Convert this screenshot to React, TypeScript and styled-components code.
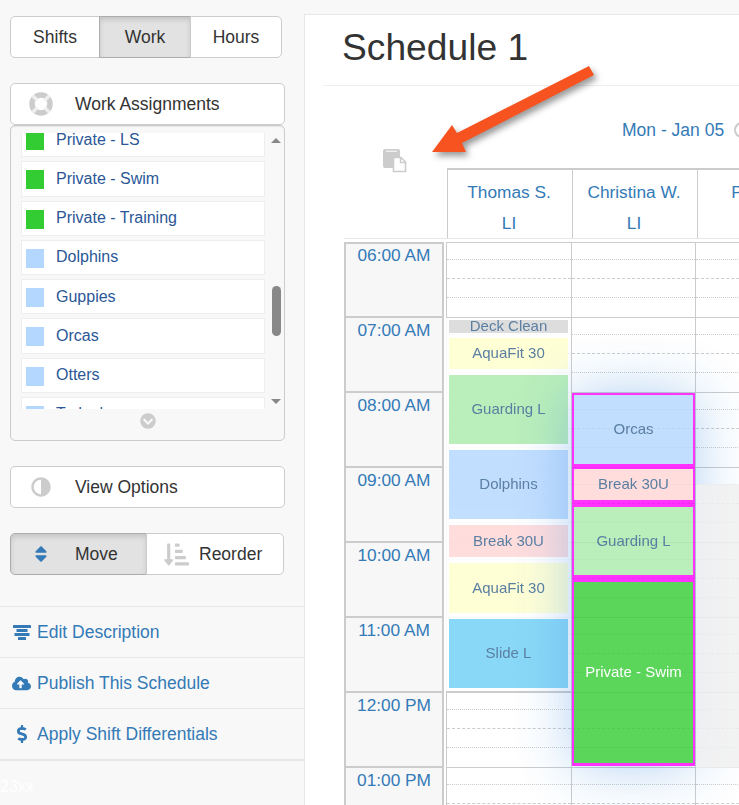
import * as React from "react";
import styled, { createGlobalStyle } from "styled-components";
import {
  FaAdjust,
  FaChevronCircleDown,
  FaCloudUploadAlt,
  FaDollarSign,
  FaSort,
  FaSortAmountDownAlt,
} from "react-icons/fa";

const GlobalStyle = createGlobalStyle`
  html, body {
    margin: 0;
    height: 100%;
    overflow: hidden;
    background: #f8f8f8;
    font-family: "Liberation Sans", Arial, sans-serif;
    font-size: 17.3px;
    color: #333;
  }
  * { box-sizing: border-box; }
`;

const Page = styled.div`
  display: flex;
  height: 805px;
  padding-top: 14px;
  overflow: hidden;
`;

// left column
const Sidebar = styled.aside`
  flex: 0 0 304px;
  margin-top: -14px;
  padding-top: 16px;
  display: flex;
  flex-direction: column;
  font-size: 17.5px;
`;

const Segmented = styled.div<{ $width: number; $mt: number }>`
  display: flex;
  width: ${(p) => p.$width}px;
  height: 42px;
  margin: ${(p) => p.$mt}px 0 0 10px;
`;

const SegButton = styled.div<{ $active?: boolean; $w: number; $start?: number; $gap?: number }>`
  flex: 0 0 ${(p) => p.$w}px;
  display: flex;
  align-items: center;
  justify-content: ${(p) => (p.$start ? "flex-start" : "center")};
  gap: ${(p) => p.$gap || 0}px;
  padding-left: ${(p) => p.$start || 0}px;
  border: 1px solid ${(p) => (p.$active ? "#adadad" : "#ccc")};
  margin-left: -1px;
  background: ${(p) => (p.$active ? "#e2e2e2" : "#fff")};
  box-shadow: ${(p) => (p.$active ? "inset 0 3px 5px rgba(0,0,0,.125)" : "none")};
  &:first-child {
    margin-left: 0;
    border-radius: 5px 0 0 5px;
  }
  &:last-child {
    border-radius: 0 5px 5px 0;
  }
`;

const PanelButton = styled.div<{ $mt: number }>`
  display: flex;
  align-items: center;
  width: 275px;
  height: 42px;
  margin: ${(p) => p.$mt}px 0 0 10px;
  padding-left: 18px;
  background: #fff;
  border: 1px solid #ccc;
  border-radius: 5px;
`;

const PanelIcon = styled.span<{ $flip?: boolean }>`
  display: flex;
  justify-content: center;
  width: 24px;
  margin-right: 22px;
  color: #ccc;
  font-size: 20px;
  transform: ${(p) => (p.$flip ? "scaleX(-1)" : "none")};
`;

const ListPanel = styled.div`
  width: 275px;
  height: 316px;
  margin: 0 0 0 10px;
  padding-top: 7px;
  border: 1px solid #ccc;
  border-radius: 5px;
  box-shadow: inset 0 1px 1px rgba(0, 0, 0, 0.08);
`;

const ListView = styled.div`
  position: relative;
  height: 276px;
  overflow: hidden;
`;

const ListRows = styled.div`
  display: flex;
  flex-direction: column;
  gap: 4px;
  width: 244px;
  margin: -11px 0 0 10px;
`;

const ListRow = styled.div`
  display: flex;
  align-items: center;
  flex: 0 0 35.25px;
  padding-left: 4px;
  background: #fff;
  border: 1px solid #eee;
  color: #2b5797;
  font-size: 16px;
`;

const Swatch = styled.span<{ $color: string }>`
  flex: 0 0 18px;
  height: 19px;
  margin: 2px 12px 0 0;
  background: ${(p) => p.$color};
`;

const ScrollTrack = styled.div`
  position: absolute;
  top: 0;
  right: 0;
  width: 19px;
  height: 276px;
  background: #f8f8f8;
`;

const ScrollThumb = styled.div`
  position: absolute;
  top: 153px;
  left: 7px;
  width: 9px;
  height: 50px;
  border-radius: 5px;
  background: #888;
`;

const ScrollArrow = styled.div<{ $down?: boolean }>`
  position: absolute;
  left: 6px;
  ${(p) => (p.$down ? "bottom: 5px;" : "top: 5px;")}
  border-left: 5px solid transparent;
  border-right: 5px solid transparent;
  ${(p) => (p.$down ? "border-top" : "border-bottom")}: 5px solid #888;
`;

const ListFooter = styled.div`
  display: flex;
  justify-content: center;
  padding-top: 4px;
  color: #ccc;
  font-size: 16px;
  line-height: 0;
`;

const MoveIcon = styled.span`
  display: flex;
  color: #337ab7;
  font-size: 20px;
`;

const ReorderIcon = styled.span`
  display: flex;
  color: #ccc;
  font-size: 25px;
`;

const ActionList = styled.div`
  margin-top: 31px;
  border-bottom: 2px solid #e7e7e7;
`;

const ActionRow = styled.div`
  display: flex;
  align-items: center;
  height: 51px;
  border-top: 1px solid #e7e7e7;
  padding-left: 12px;
  color: #337ab7;
`;

const ActionIcon = styled.span<{ $size: number }>`
  display: flex;
  justify-content: center;
  flex: 0 0 19px;
  margin-right: 6px;
  font-size: ${(p) => p.$size}px;
`;

const Watermark = styled.div`
  margin-top: 17px;
  color: #fff;
  font-size: 16px;
`;

// schedule panel
const Main = styled.main`
  position: relative;
  flex: 1;
  min-width: 0;
  overflow: hidden;
  background: #fff;
  border-left: 1px solid #e7e7e7;
  border-top: 1px solid #e7e7e7;
`;

const Title = styled.h1`
  height: 71px;
  margin: 0 0 0 18px;
  padding: 12px 0 0 19px;
  border-bottom: 1px solid #eee;
  font-size: 37.2px;
  font-weight: 400;
  line-height: 40px;
`;

const DateRow = styled.div`
  display: flex;
  align-items: center;
  gap: 10px;
  height: 63px;
  padding: 25px 0 0 317px;
  color: #337ab7;
  font-size: 17.5px;
  white-space: nowrap;
`;

const DateHint = styled.span`
  flex: 0 0 16px;
  height: 16px;
  border: 2px solid #ccc;
  border-radius: 50%;
`;

const HeadBlock = styled.div`
  display: flex;
  align-items: flex-start;
`;

const Corner = styled.div`
  flex: 0 0 142px;
  padding-left: 78px;
`;

const HeadCols = styled.div`
  display: flex;
  flex: 1;
  margin-top: 19px;
  border-top: 2px solid #ccc;
`;

const HeadCell = styled.div`
  flex: 0 0 125px;
  height: 68px;
  padding: 7px 2px 0 0;
  border-left: 1px solid #ccc;
  color: #337ab7;
  text-align: center;
  line-height: 31px;
`;

const Board = styled.div`
  display: flex;
  gap: 2px;
  margin-left: 39px;
  padding-top: 3px;
  border-top: 1px solid #e7e7e7;
`;

const TimeCol = styled.div`
  flex: 0 0 100px;
`;

const TimeCell = styled.div`
  height: 75px;
  padding-top: 1px;
  background: #f7f7f7;
  border: 2px solid #ccc;
  border-bottom-width: 0;
  color: #337ab7;
  text-align: center;
  line-height: 22px;
  &:first-child {
    height: 74px;
    padding-top: 0;
  }
`;

const Grid = styled.div`
  position: relative;
  display: flex;
  flex: 1;
  min-width: 0;
`;

const GridCol = styled.div<{ $w: number }>`
  flex: 0 0 ${(p) => p.$w}px;
  border-left: 1px solid #ccc;
`;

const Hour = styled.div`
  height: 75px;
  border-top: 1px solid #ccc;
`;

const Quarter = styled.div<{ $h: number; $line: string }>`
  height: ${(p) => p.$h}px;
  border-bottom: 1px ${(p) => p.$line} #ccc;
  box-sizing: content-box;
`;

const ColumnStack = styled.div`
  position: absolute;
  top: 76px;
  left: 0;
  z-index: 1;
  display: flex;
  flex-direction: column;
  width: 125px;
  height: 375px;
  padding: 2px 3px;
  background: rgba(255, 255, 255, 0.85);
  border-bottom: 2px solid #ccc;
`;

const DragGroup = styled.div`
  position: absolute;
  top: 151px;
  left: 126px;
  z-index: 2;
  display: flex;
  flex-direction: column;
  width: 123px;
  padding: 2px 2px 3px;
  background: #ff00ff;
  opacity: 0.8;
  box-shadow: 0 0 55px rgba(60, 140, 225, 0.5);
`;

const BlockedArea = styled.div`
  position: absolute;
  top: 242px;
  left: 250px;
  right: 0;
  z-index: 3;
  height: 284px;
  background: rgba(240, 240, 240, 0.85);
`;

const tones: Record<string, string> = {
  deck: "#d5d5d5",
  aqua: "#ffffcc",
  guard: "#aaebaa",
  blue: "#b3d7ff",
  brk: "#ffd5d5",
  slide: "#6ecff6",
  swim: "#33cc33",
};

const Event = styled.div<{ $tone: string; $h: number; $mt?: number; $ghost?: boolean; $light?: boolean }>`
  display: flex;
  flex: 0 0 ${(p) => p.$h}px;
  min-height: 0;
  padding-bottom: 2px;
  align-items: center;
  justify-content: center;
  margin-top: ${(p) => p.$mt || 0}px;
  background: ${(p) => tones[p.$tone]};
  color: ${(p) => (p.$light ? "#fff" : "#33608c")};
  font-size: 15px;
  opacity: ${(p) => (p.$ghost ? 0.8 : 1)};
`;

const ArrowLayer = styled.svg`
  position: absolute;
  top: -15px;
  left: -305px;
  z-index: 5;
  filter: drop-shadow(3px 4px 3px rgba(0, 0, 0, 0.4));
  pointer-events: none;
`;

const workItems = [
  { label: "Private - LS", color: "#33cc33" },
  { label: "Private - Swim", color: "#33cc33" },
  { label: "Private - Training", color: "#33cc33" },
  { label: "Dolphins", color: "#b3d7ff" },
  { label: "Guppies", color: "#b3d7ff" },
  { label: "Orcas", color: "#b3d7ff" },
  { label: "Otters", color: "#b3d7ff" },
  { label: "Tadpoles", color: "#b3d7ff" },
];

const hours = ["06:00 AM", "07:00 AM", "08:00 AM", "09:00 AM", "10:00 AM", "11:00 AM", "12:00 PM", "01:00 PM"];

const CopyIcon = () => (
  <svg width="24" height="24" viewBox="0 0 24 24" style={{ display: "block" }}>
    <path d="M0 2 Q0 0 2 0 H15 Q17 0 17 2 V8 H10 V19 H2 Q0 19 0 17 Z" fill="#ccc" />
    <rect x="3" y="1.5" width="11" height="1.5" fill="#eee" />
    <path d="M10.5 8.5 H18 L22.5 13 V22.5 H10.5 Z" fill="#fff" stroke="#ccc" strokeWidth="1.6" />
    <path d="M17.5 8.5 V13.5 H22.5" fill="none" stroke="#ccc" strokeWidth="1.4" />
  </svg>
);

const RingIcon = () => (
  <svg width="24" height="24" viewBox="0 0 24 24" style={{ display: "block" }}>
    <circle cx="12" cy="12" r="9" fill="none" stroke="#ccc" strokeWidth="5.5" />
    <g stroke="#efefef" strokeWidth="3.4">
      <path d="M3.6 3.6 L8.2 8.2" />
      <path d="M20.4 3.6 L15.8 8.2" />
      <path d="M3.6 20.4 L8.2 15.8" />
      <path d="M20.4 20.4 L15.8 15.8" />
    </g>
  </svg>
);

const AlignIcon = () => (
  <svg width="18" height="15" viewBox="0 0 18 15" fill="#337ab7" style={{ display: "block" }}>
    <rect x="0" y="0" width="18" height="3" rx="0.5" />
    <rect x="3.5" y="4" width="11" height="3" rx="0.5" />
    <rect x="1.5" y="8" width="15" height="3" rx="0.5" />
    <rect x="5" y="12" width="8" height="3" rx="0.5" />
  </svg>
);

const GridColumn = ({ w }: { w: number }) => (
  <GridCol $w={w}>
    {hours.map((h) => (
      <Hour key={h}>
        <Quarter $h={16} $line="dotted" />
        <Quarter $h={18} $line="dashed" />
        <Quarter $h={18} $line="dotted" />
      </Hour>
    ))}
  </GridCol>
);

export default function App() {
  return (
    <Page>
      <GlobalStyle />
      <Sidebar>
        <Segmented $width={272} $mt={0}>
          <SegButton $w={90}>Shifts</SegButton>
          <SegButton $w={92} $active>
            Work
          </SegButton>
          <SegButton $w={92}>Hours</SegButton>
        </Segmented>

        <PanelButton $mt={25}>
          <PanelIcon>
            <RingIcon />
          </PanelIcon>
          Work Assignments
        </PanelButton>
        <ListPanel>
          <ListView>
            <ListRows>
              {workItems.map((item) => (
                <ListRow key={item.label}>
                  <Swatch $color={item.color} />
                  {item.label}
                </ListRow>
              ))}
            </ListRows>
            <ScrollTrack>
              <ScrollArrow />
              <ScrollThumb />
              <ScrollArrow $down />
            </ScrollTrack>
          </ListView>
          <ListFooter>
            <FaChevronCircleDown />
          </ListFooter>
        </ListPanel>

        <PanelButton $mt={25}>
          <PanelIcon $flip>
            <FaAdjust />
          </PanelIcon>
          View Options
        </PanelButton>

        <Segmented $width={274} $mt={25}>
          <SegButton $w={137} $active $start={20} $gap={24}>
            <MoveIcon>
              <FaSort />
            </MoveIcon>
            Move
          </SegButton>
          <SegButton $w={138} $start={17} $gap={10}>
            <ReorderIcon>
              <FaSortAmountDownAlt />
            </ReorderIcon>
            Reorder
          </SegButton>
        </Segmented>

        <ActionList>
          <ActionRow>
            <ActionIcon $size={18}>
              <AlignIcon />
            </ActionIcon>
            Edit Description
          </ActionRow>
          <ActionRow>
            <ActionIcon $size={19}>
              <FaCloudUploadAlt />
            </ActionIcon>
            Publish This Schedule
          </ActionRow>
          <ActionRow>
            <ActionIcon $size={18}>
              <FaDollarSign />
            </ActionIcon>
            Apply Shift Differentials
          </ActionRow>
        </ActionList>
        <Watermark>23xx</Watermark>
      </Sidebar>

      <Main>
        <Title>Schedule 1</Title>
        <DateRow>
          Mon - Jan 05
          <DateHint />
        </DateRow>
        <HeadBlock>
          <Corner>
            <CopyIcon />
          </Corner>
          <HeadCols>
            <HeadCell>
              Thomas S.
              <br />
              LI
            </HeadCell>
            <HeadCell>
              Christina W.
              <br />
              LI
            </HeadCell>
            <HeadCell>
              Paul B.
              <br />
              LI
            </HeadCell>
          </HeadCols>
        </HeadBlock>
        <Board>
          <TimeCol>
            {hours.map((h) => (
              <TimeCell key={h}>{h}</TimeCell>
            ))}
          </TimeCol>
          <Grid>
            <GridColumn w={125} />
            <GridColumn w={124} />
            <GridColumn w={125} />
            <ColumnStack>
              <Event $tone="deck" $h={13} $ghost>
                Deck Clean
              </Event>
              <Event $tone="aqua" $h={31} $mt={5} $ghost>
                AquaFit 30
              </Event>
              <Event $tone="guard" $h={69} $mt={6} $ghost>
                Guarding L
              </Event>
              <Event $tone="blue" $h={69} $mt={6} $ghost>
                Dolphins
              </Event>
              <Event $tone="brk" $h={32} $mt={6} $ghost>
                Break 30U
              </Event>
              <Event $tone="aqua" $h={50} $mt={6} $ghost>
                AquaFit 30
              </Event>
              <Event $tone="slide" $h={69} $mt={6} $ghost>
                Slide L
              </Event>
            </ColumnStack>
            <DragGroup>
              <Event $tone="blue" $h={69}>
                Orcas
              </Event>
              <Event $tone="brk" $h={31} $mt={5}>
                Break 30U
              </Event>
              <Event $tone="guard" $h={68} $mt={7}>
                Guarding L
              </Event>
              <Event $tone="swim" $h={181} $mt={7} $light>
                Private - Swim
              </Event>
            </DragGroup>
            <BlockedArea />
          </Grid>
        </Board>
        <ArrowLayer width="739" height="200" viewBox="0 0 739 200">
          <polygon points="589,66 594,75 462,143 466,152 432,152 452,125 457,133" fill="#f65321" />
        </ArrowLayer>
      </Main>
    </Page>
  );
}
